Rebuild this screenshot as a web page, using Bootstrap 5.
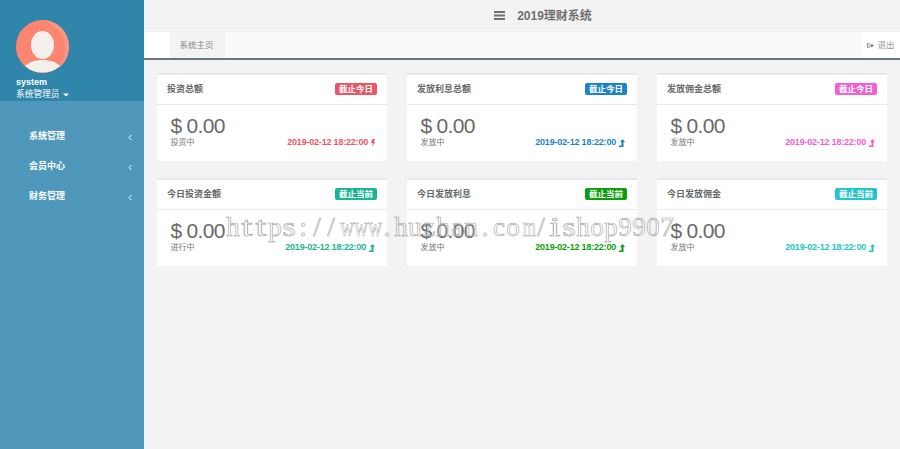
<!DOCTYPE html>
<html lang="zh">
<head>
  <meta charset="UTF-8" />
  <meta name="viewport" content="width=device-width, initial-scale=1.0"/>
  <title>2019理财系统</title>
  <link href="https://cdn.jsdelivr.net/npm/bootstrap@5.3.0/dist/css/bootstrap.min.css" rel="stylesheet">
  <style>
    html, body { height: 100%; }
    body { background-color: #f3f3f4; color: #676a6c; font-family: "Liberation Sans", "Noto Sans CJK SC", sans-serif; font-size: 10px; overflow: hidden; }
    .shell { height: 449px; position: relative; }
    .side { width: 144px; background-color: #4f98bc; color: #fff; flex: none; }
    .side-top { height: 101px; background-color: #2f85aa; padding: 20px 0 0 16px; }
    .face { width: 53px; height: 53px; display: block; }
    .who { font-size: 9px; font-weight: 700; line-height: 11px; margin-top: 4px; }
    .role { font-size: 8.700px; line-height: 12px; }
    .side-menu { padding-top: 20px; }
    .side-menu a { display: flex; justify-content: space-between; align-items: center; height: 30px; padding: 2px 12px 0 29px; color: #fff; font-size: 9px; font-weight: 700; text-decoration: none; }
    .top-title { height: 31px; font-size: 12px; font-weight: 700; color: #6f6f6f; gap: 12px; padding-left: 42px; }
    .tab-strip { height: 29px; background-color: #fafafa; border-top: 1px solid #eee; border-bottom: 2px solid #69757f; }
    .tab-lead { width: 26px; background-color: #fff; }
    .tab-on { width: 55px; padding-right: 2px; background-color: #f3f3f4; color: #8a8a8a; font-size: 8.500px; }
    .tab-out { width: 38px; background-color: #fff; color: #999; font-size: 8.500px; gap: 3px; }
    .board { display: grid; grid-template-columns: repeat(3, 230px); column-gap: 20px; row-gap: 17px; padding: 13px 0 0 13px; }
    .tile { background-color: #fff; border-top: 2px solid #e7eaec; height: 88px; }
    .tile-head { height: 30px; border-bottom: 1px solid #e7eaec; padding: 0 10px 1px 10px; font-size: 9px; font-weight: 700; color: #676a6c; }
    .tile-head > span:first-child { margin-top: 2px; }
    .tag { color: #fff; font-size: 8.500px; font-weight: 700; line-height: 12px; width: 42px; text-align: center; border-radius: 2px; }
    .tile-body { padding: 8px 12px 0 13.500px; }
    .amount { font-size: 21px; line-height: 25px; letter-spacing: -.7px; color: #676a6c; }
    .tile-foot { line-height: 11px; margin-top: -1px; }
    .state { font-size: 8px; color: #777; }
    .stamp { font-size: 9px; letter-spacing: -.2px; font-weight: 700; gap: 3px; }
    .tone-red { color: #ed5565; } .bg-red { background-color: #ed5565; }
    .tone-blue { color: #1c84c6; } .bg-blue { background-color: #1c84c6; }
    .tone-pink { color: #f35ed0; } .bg-pink { background-color: #f35ed0; }
    .tone-teal { color: #1ab394; } .bg-teal { background-color: #1ab394; }
    .tone-green { color: #0a9e0a; } .bg-green { background-color: #0a9e0a; }
    .tone-cyan { color: #23c6c8; } .bg-cyan { background-color: #23c6c8; }
    .watermark { position: absolute; left: 226px; top: 210px; font-family: "Liberation Serif", serif; font-size: 27px; line-height: 34px; white-space: nowrap; color: rgba(255,255,255,.3); -webkit-text-stroke: .6px #a0a0a0; }
    .watermark span { display: inline-block; width: 14px; text-align: center; }
    .watermark .wide { transform: scaleX(.72); }
    .watermark .wider { transform: scaleX(.62); }
    .watermark .thin { transform: scaleX(1.5); }
    .watermark .slim { transform: scaleX(1.25); }
  </style>
</head>
<body>
  <div class="shell d-flex">
    <aside class="side">
      <div class="side-top">
        <svg class="face" viewBox="0 0 53 53">
          <circle cx="26.5" cy="26.5" r="26.5" fill="#fb8570"/>
          <path d="M26.500 0a26.500 26.500 0 0 1 26.500 26.500c0 9-4 17-11 22 5-6 7-13 7-20C49 15 40 5 26.500 0z" fill="#fc9482"/>
          <ellipse cx="26.5" cy="25" rx="11.500" ry="14" fill="#f5efec"/>
          <path d="M9 46c4-4 10-6 17.500-6S40 42 44 46a26.500 26.500 0 0 1-35 0z" fill="#f5efec"/>
        </svg>
        <div class="who">system</div>
        <div class="role">系统管理员<svg width="6" height="4" viewBox="0 0 6 4" class="ms-1 align-middle"><path d="M0 .5h6L3 3.500z" fill="#fff"/></svg></div>
      </div>
      <nav class="side-menu">
        <a href="#">系统管理<svg width="4" height="7" viewBox="0 0 4 7"><path d="M3.500 1 1 3.500 3.500 6" fill="none" stroke="#fff"/></svg></a>
        <a href="#">会员中心<svg width="4" height="7" viewBox="0 0 4 7"><path d="M3.500 1 1 3.500 3.500 6" fill="none" stroke="#fff"/></svg></a>
        <a href="#">财务管理<svg width="4" height="7" viewBox="0 0 4 7"><path d="M3.500 1 1 3.500 3.500 6" fill="none" stroke="#fff"/></svg></a>
      </nav>
    </aside>
    <main class="flex-grow-1">
      <div class="top-title d-flex align-items-center justify-content-center">
        <svg width="11" height="9" viewBox="0 0 11 9"><path d="M0 0h11v2H0zM0 3.500h11v2H0zM0 7h11v2H0z" fill="#6f6f6f"/></svg>
        <span>2019理财系统</span>
      </div>
      <div class="tab-strip d-flex">
        <div class="tab-lead"></div>
        <div class="tab-on d-flex align-items-center justify-content-center">系统主页</div>
        <div class="tab-out d-flex align-items-center justify-content-center ms-auto">
          <svg width="7" height="7" viewBox="0 0 8 7"><path d="M0 1h3v1H1v3h2v1H0zM3 2.500h2V1l3 2.500L5 6V4.500H3z" fill="#888"/></svg>
          <span>退出</span>
        </div>
      </div>
      <div class="board">
        <section class="tile">
          <div class="tile-head d-flex justify-content-between align-items-center"><span>投资总额</span><span class="tag bg-red">截止今日</span></div>
          <div class="tile-body">
            <div class="amount">$ 0.00</div>
            <div class="tile-foot d-flex justify-content-between align-items-center"><span class="state">投资中</span><span class="stamp tone-red d-flex align-items-center">2019-02-12 18:22:00<svg width="4" height="8" viewBox="0 0 4 8"><path d="M1.500 0H4L2.800 3H4L1 8l.8-4H0z" fill="currentColor"/></svg></span></div>
          </div>
        </section>
        <section class="tile">
          <div class="tile-head d-flex justify-content-between align-items-center"><span>发放利息总额</span><span class="tag bg-blue">截止今日</span></div>
          <div class="tile-body">
            <div class="amount">$ 0.00</div>
            <div class="tile-foot d-flex justify-content-between align-items-center"><span class="state">发放中</span><span class="stamp tone-blue d-flex align-items-center">2019-02-12 18:22:00<svg width="6" height="8" viewBox="0 0 6 8"><path d="M0 6.500h2.500V3H1l2.500-3L6 3H4.500v5H0z" fill="currentColor"/></svg></span></div>
          </div>
        </section>
        <section class="tile">
          <div class="tile-head d-flex justify-content-between align-items-center"><span>发放佣金总额</span><span class="tag bg-pink">截止今日</span></div>
          <div class="tile-body">
            <div class="amount">$ 0.00</div>
            <div class="tile-foot d-flex justify-content-between align-items-center"><span class="state">发放中</span><span class="stamp tone-pink d-flex align-items-center">2019-02-12 18:22:00<svg width="6" height="8" viewBox="0 0 6 8"><path d="M0 6.500h2.500V3H1l2.500-3L6 3H4.500v5H0z" fill="currentColor"/></svg></span></div>
          </div>
        </section>
        <section class="tile">
          <div class="tile-head d-flex justify-content-between align-items-center"><span>今日投资金额</span><span class="tag bg-teal">截止当前</span></div>
          <div class="tile-body">
            <div class="amount">$ 0.00</div>
            <div class="tile-foot d-flex justify-content-between align-items-center"><span class="state">进行中</span><span class="stamp tone-teal d-flex align-items-center">2019-02-12 18:22:00<svg width="6" height="8" viewBox="0 0 6 8"><path d="M0 6.500h2.500V3H1l2.500-3L6 3H4.500v5H0z" fill="currentColor"/></svg></span></div>
          </div>
        </section>
        <section class="tile">
          <div class="tile-head d-flex justify-content-between align-items-center"><span>今日发放利息</span><span class="tag bg-green">截止当前</span></div>
          <div class="tile-body">
            <div class="amount">$ 0.00</div>
            <div class="tile-foot d-flex justify-content-between align-items-center"><span class="state">发放中</span><span class="stamp tone-green d-flex align-items-center">2019-02-12 18:22:00<svg width="6" height="8" viewBox="0 0 6 8"><path d="M0 6.500h2.500V3H1l2.500-3L6 3H4.500v5H0z" fill="currentColor"/></svg></span></div>
          </div>
        </section>
        <section class="tile">
          <div class="tile-head d-flex justify-content-between align-items-center"><span>今日发放佣金</span><span class="tag bg-cyan">截止当前</span></div>
          <div class="tile-body">
            <div class="amount">$ 0.00</div>
            <div class="tile-foot d-flex justify-content-between align-items-center"><span class="state">发放中</span><span class="stamp tone-cyan d-flex align-items-center">2019-02-12 18:22:00<svg width="6" height="8" viewBox="0 0 6 8"><path d="M0 6.500h2.500V3H1l2.500-3L6 3H4.500v5H0z" fill="currentColor"/></svg></span></div>
          </div>
        </section>
      </div>
    </main>
    <div class="watermark" id="marca">https://www.huzhan.com/ishop9907</div>
  </div>
  <script src="https://cdn.jsdelivr.net/npm/bootstrap@5.3.0/dist/js/bootstrap.bundle.min.js"></script>
  <script>
    // la marca de agua va en celdas fijas de 14px, como una fuente monoespaciada con serifas
    const anchos = { w: "wide", m: "wider", t: "thin", i: "thin", s: "slim" };
    const marca = document.getElementById("marca");
    marca.innerHTML = [...marca.textContent].map(c => `<span class="${anchos[c] || ""}">${c}</span>`).join("");
  </script>
</body>
</html>
